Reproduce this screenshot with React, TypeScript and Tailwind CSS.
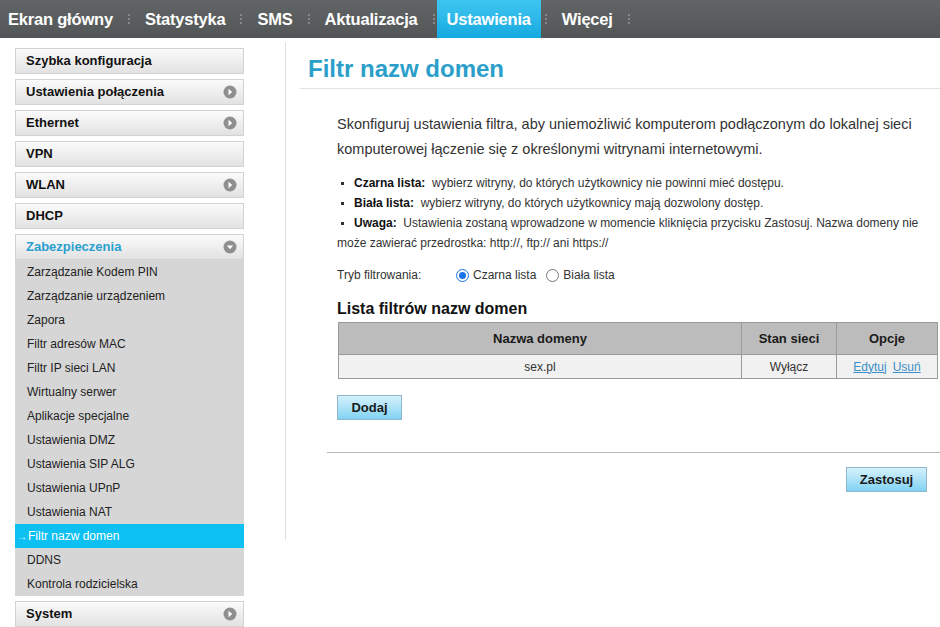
import React from 'react';

const navItems = ['Ekran główny', 'Statystyka', 'SMS', 'Aktualizacja', 'Ustawienia', 'Więcej'];

const topMenu = [
  { label: 'Szybka konfiguracja', arrow: false },
  { label: 'Ustawienia połączenia', arrow: true },
  { label: 'Ethernet', arrow: true },
  { label: 'VPN', arrow: false },
  { label: 'WLAN', arrow: true },
  { label: 'DHCP', arrow: false },
];

const subMenu = [
  'Zarządzanie Kodem PIN',
  'Zarządzanie urządzeniem',
  'Zapora',
  'Filtr adresów MAC',
  'Filtr IP sieci LAN',
  'Wirtualny serwer',
  'Aplikacje specjalne',
  'Ustawienia DMZ',
  'Ustawienia SIP ALG',
  'Ustawienia UPnP',
  'Ustawienia NAT',
  'Filtr nazw domen',
  'DDNS',
  'Kontrola rodzicielska',
];

function CircleIcon({ down }: { down?: boolean }) {
  return (
    <svg width="14" height="14" viewBox="0 0 14 14">
      <circle cx="7" cy="7" r="6.5" fill="#8f8f8f" />
      {down ? <path d="M3.8 5.5 L10.2 5.5 L7 9.2 Z" fill="#fff" /> : <path d="M5.5 3.8 L5.5 10.2 L9.2 7 Z" fill="#fff" />}
    </svg>
  );
}

function Separator() {
  return (
    <div className="flex items-center">
      <div className="flex flex-col gap-[2px] mx-[15px]">
        <span className="w-[2px] h-[2px] bg-[#858888]" />
        <span className="w-[2px] h-[2px] bg-[#858888]" />
        <span className="w-[2px] h-[2px] bg-[#858888]" />
      </div>
    </div>
  );
}

function Bullet() {
  return <span className="inline-block w-[3px] h-[3px] bg-[#333] ml-[4px] mr-[10px] align-middle" />;
}

function MenuButton({ label, arrow }: { label: string; arrow: boolean }) {
  return (
    <div className="h-[26px] flex items-center justify-between pl-[10px] pr-[6px] border border-[#d2d2d2] bg-gradient-to-b from-[#fbfbfb] to-[#e2e2e2] text-[13px] font-bold text-[#111]">
      <span>{label}</span>
      {arrow && <CircleIcon />}
    </div>
  );
}

function BlueButton({ children, className }: { children: React.ReactNode; className?: string }) {
  return (
    <button className={`h-[25px] border border-[#8fb7cc] bg-gradient-to-b from-[#d5f1fc] to-[#7fd3f3] text-[13px] font-bold text-[#1a1a1a] ${className ?? ''}`}>
      {children}
    </button>
  );
}

export default function App() {
  return (
    <div className="w-[940px] h-[627px] overflow-hidden bg-white font-['Liberation_Sans',Arial,sans-serif] text-[#333]">
      {/* Top navigation */}
      <div className="h-[38px] bg-gradient-to-b from-[#626565] to-[#535656] flex items-stretch pl-[8px]">
        {navItems.map((item) => {
          const active = item === 'Ustawienia';
          return (
            <React.Fragment key={item}>
              <div
                className={`flex items-center text-[16.5px] font-bold text-white tracking-[-0.2px] ${
                  active ? 'bg-gradient-to-b from-[#3ec6f2] to-[#12a9df] px-[10px] -ml-[13px] -mr-[11px]' : ''
                }`}
              >
                {item}
              </div>
              <Separator />
            </React.Fragment>
          );
        })}
      </div>

      <div className="flex">
        {/* Sidebar */}
        <div className="w-[286px] pl-[15px] pt-[10px] flex">
          <div className="w-[229px] flex flex-col gap-[5px]">
            {topMenu.map((m) => (
              <MenuButton key={m.label} label={m.label} arrow={m.arrow} />
            ))}
            <div>
              <div className="h-[26px] flex items-center justify-between pl-[10px] pr-[6px] border border-[#d2d2d2] bg-gradient-to-b from-[#fbfbfb] to-[#e2e2e2] text-[13px] font-bold text-[#2a9fd0]">
                <span>Zabezpieczenia</span>
                <CircleIcon down />
              </div>
              <div className="bg-[#d6d6d6] flex flex-col">
                {subMenu.map((s) => {
                  const active = s === 'Filtr nazw domen';
                  return (
                    <div
                      key={s}
                      className={`h-[24px] flex items-center text-[12px] ${
                        active ? 'bg-[#0dc0f2] text-white pl-[2px]' : 'text-[#222] pl-[12px]'
                      }`}
                    >
                      {active && <span className="text-[10px] mr-[1px]">→</span>}
                      {s}
                    </div>
                  );
                })}
              </div>
            </div>
            <MenuButton label="System" arrow />
          </div>
          <div className="ml-[41px] mt-[-6px] w-px h-[498px] bg-[#e0e0e0]" />
        </div>

        {/* Main content */}
        <div className="flex-1 pt-[16px]">
          <div className="pl-[8px] pb-[4px] border-b border-[#e2e2e2] ml-[14px]">
            <h1 className="text-[24px] font-bold text-[#2b9fc9] leading-[30px]">Filtr nazw domen</h1>
          </div>

          <div className="pl-[51px] pr-[6px] pt-[23px]">
            <p className="text-[14.5px] leading-[25px] text-[#333]">
              Skonfiguruj ustawienia filtra, aby uniemożliwić komputerom podłączonym do lokalnej sieci komputerowej łączenie się z określonymi witrynami internetowymi.
            </p>

            <div className="mt-[11px] text-[12px] leading-[20px] text-[#333]">
              <p>
                <Bullet />
                <b className="text-[#111]">Czarna lista:</b>&nbsp; wybierz witryny, do których użytkownicy nie powinni mieć dostępu.
              </p>
              <p>
                <Bullet />
                <b className="text-[#111]">Biała lista:</b>&nbsp; wybierz witryny, do których użytkownicy mają dozwolony dostęp.
              </p>
              <p>
                <Bullet />
                <b className="text-[#111]">Uwaga:</b>
                <span>&nbsp; Ustawienia zostaną wprowadzone w momencie kliknięcia przycisku Zastosuj. Nazwa domeny nie</span>
                <br />
                <span>może zawierać przedrostka: http://, ftp:// ani https://</span>
              </p>
            </div>

            <div className="mt-[12px] flex items-center text-[12px] text-[#333] h-[20px]">
              <span className="w-[119px]">Tryb filtrowania:</span>
              <span className="w-[13px] h-[13px] rounded-full border border-[#1a73e8] flex items-center justify-center mr-[4px]">
                <span className="w-[7px] h-[7px] rounded-full bg-[#1a73e8]" />
              </span>
              <span className="mr-[10px]">Czarna lista</span>
              <span className="w-[13px] h-[13px] rounded-full border border-[#777] mr-[4px]" />
              <span>Biała lista</span>
            </div>

            <h2 className="mt-[14px] text-[16px] font-bold text-[#111] leading-[20px]">Lista filtrów nazw domen</h2>

            <table className="mt-[3px] w-[600px] ml-[1px] border-collapse text-[12px] text-[#333]">
              <thead>
                <tr className="h-[32px] bg-[#bcbcbc] text-[13px] font-bold text-[#1a1a1a]">
                  <th className="w-[403px] border border-[#9a9a9a] font-bold">Nazwa domeny</th>
                  <th className="w-[95px] border border-[#9a9a9a] font-bold">Stan sieci</th>
                  <th className="border border-[#9a9a9a] font-bold">Opcje</th>
                </tr>
              </thead>
              <tbody>
                <tr className="h-[24px] bg-[#f1f1f1] text-center">
                  <td className="border border-[#9a9a9a]">sex.pl</td>
                  <td className="border border-[#9a9a9a]">Wyłącz</td>
                  <td className="border border-[#9a9a9a]">
                    <span className="underline text-[#3a8fc8]">Edytuj</span>
                    <span className="underline text-[#3a8fc8] ml-[6px]">Usuń</span>
                  </td>
                </tr>
              </tbody>
            </table>

            <BlueButton className="mt-[16px] w-[65px]">Dodaj</BlueButton>
          </div>

          <div className="mt-[32px] ml-[41px] border-t border-[#b8b8b8]" />

          <div className="flex justify-end pr-[17px] mt-[14px]">
            <BlueButton className="w-[81px]">Zastosuj</BlueButton>
          </div>
        </div>
      </div>
    </div>
  );
}
